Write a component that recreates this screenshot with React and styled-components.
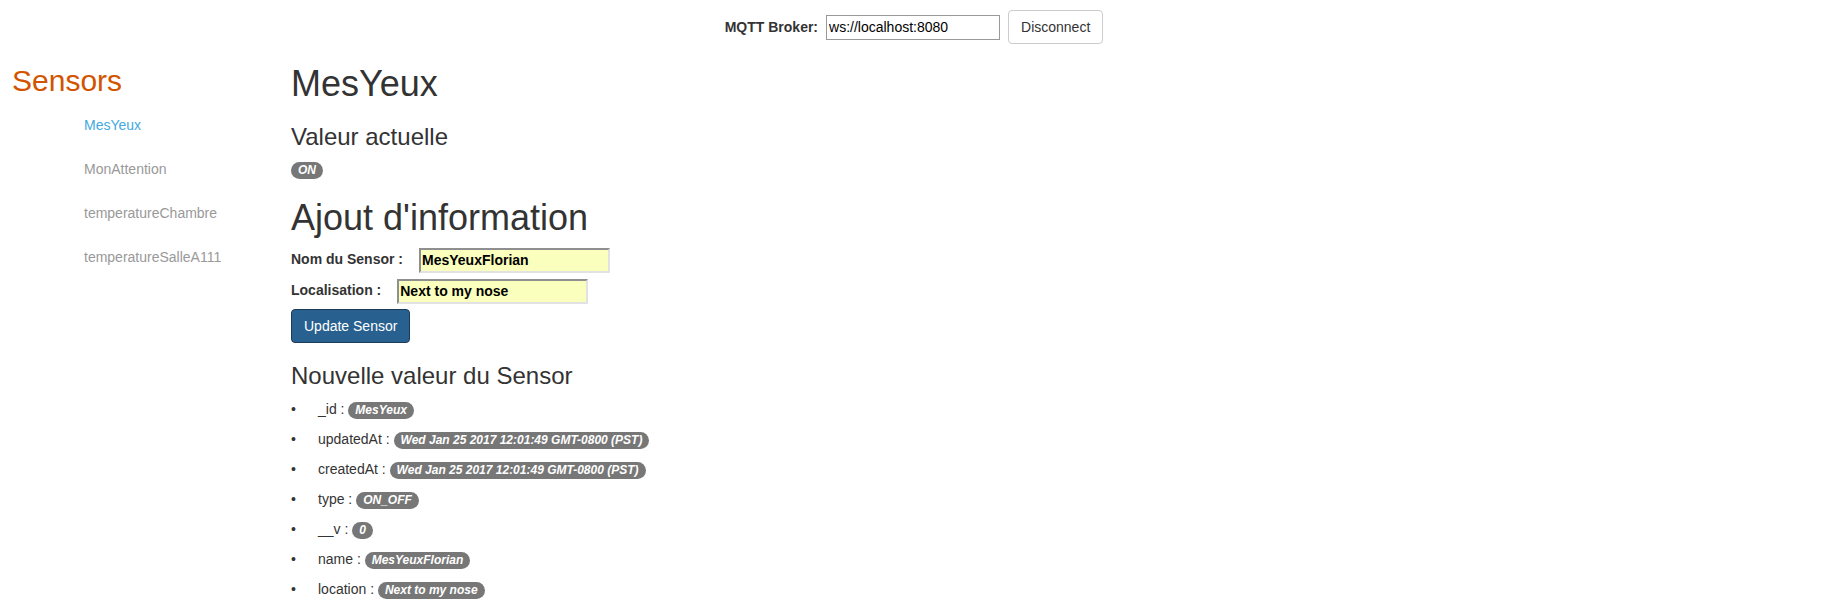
import styled, { createGlobalStyle } from 'styled-components';

const GlobalStyle = createGlobalStyle`
  html, body {
    margin: 0;
    padding: 0;
    background: #fff;
  }
  body {
    font-family: "Liberation Sans", Arial, sans-serif;
    font-size: 14px;
    line-height: 1.42857;
    color: #333;
  }
  * {
    box-sizing: border-box;
  }
`

const BrokerBar = styled.div`
  display: flex;
  justify-content: center;
  align-items: baseline;
  padding-top: 10px;
`

const BrokerLabel = styled.label`
  font-weight: bold;
  margin-right: 8px;
`

const BrokerInput = styled.input`
  width: 174px;
  height: 25px;
  padding: 1px 2px;
  border: 1px solid #999;
  font: 14px "Liberation Sans", Arial, sans-serif;
  color: #000;
`

const DefaultButton = styled.button`
  margin-left: 8px;
  padding: 6px 12px;
  font: 14px/20px "Liberation Sans", Arial, sans-serif;
  color: #333;
  background: #fff;
  border: 1px solid #ccc;
  border-radius: 4px;
`

const Layout = styled.div`
  display: grid;
  grid-template-columns: 291px 1fr;
`

const Sidebar = styled.aside`
  padding-left: 12px;
`

const SidebarTitle = styled.h2`
  margin: 20px 0 8px;
  font-size: 30px;
  font-weight: 500;
  line-height: 1.1;
  color: #d35400;
`

const SensorList = styled.ul`
  list-style: none;
  margin: 0;
  padding: 0 0 0 57px;
  display: flex;
  flex-direction: column;
  gap: 4px;
`

const SensorLink = styled.a`
  display: block;
  padding: 10px 15px;
  line-height: 20px;
  text-decoration: none;
  color: ${p => (p.$active ? '#3fa9e0' : '#999')};
`

const Main = styled.main``

const Title = styled.h1`
  margin: ${p => p.$top || 20}px 0 10px;
  font-size: 36px;
  font-weight: 500;
  line-height: 1.1;
`

const SubTitle = styled.h3`
  margin: 20px 0 10px;
  font-size: 24px;
  font-weight: 500;
  line-height: 1.1;
`

const Badge = styled.span`
  display: inline-block;
  min-width: 10px;
  padding: 2px 7px;
  font-size: 12px;
  font-weight: bold;
  font-style: italic;
  line-height: 13px;
  color: #fff;
  text-align: center;
  white-space: nowrap;
  vertical-align: middle;
  background: #777;
  border-radius: 10px;
`

const Form = styled.form`
  display: flex;
  flex-direction: column;
  align-items: flex-start;
  gap: 6px;
`

const FieldRow = styled.div`
  display: flex;
  align-items: center;
`

const FieldLabel = styled.label`
  font-weight: bold;
  margin-right: 16px;
`

const FieldInput = styled.input`
  width: 191px;
  height: 25px;
  padding: 1px 1px;
  font: bold 14px "Liberation Sans", Arial, sans-serif;
  color: #000;
  background: #faffbd;
  border: 2px solid;
  border-color: #8f8f8f #e2e2e2 #e2e2e2 #8f8f8f;
`

const PrimaryButton = styled.button`
  margin-top: -1px;
  padding: 6px 12px;
  font: 14px/20px "Liberation Sans", Arial, sans-serif;
  color: #fff;
  background: #286090;
  border: 1px solid #1d3b57;
  border-radius: 4px;
`

const PropList = styled.ul`
  list-style: none;
  margin: 0;
  padding: 0;
`

const PropItem = styled.li`
  line-height: 20px;
  margin-bottom: 10px;

  &::before {
    content: '•';
    display: inline-block;
    width: 27px;
  }
`

const sensors = ['MesYeux', 'MonAttention', 'temperatureChambre', 'temperatureSalleA111'];

const props = [
  ['_id', 'MesYeux'],
  ['updatedAt', 'Wed Jan 25 2017 12:01:49 GMT-0800 (PST)'],
  ['createdAt', 'Wed Jan 25 2017 12:01:49 GMT-0800 (PST)'],
  ['type', 'ON_OFF'],
  ['__v', '0'],
  ['name', 'MesYeuxFlorian'],
  ['location', 'Next to my nose'],
];

export default function App() {
  return <>
    <GlobalStyle />
    <BrokerBar>
      <BrokerLabel>MQTT Broker:</BrokerLabel>
      <BrokerInput defaultValue="ws://localhost:8080" />
      <DefaultButton>Disconnect</DefaultButton>
    </BrokerBar>
    <Layout>
      <Sidebar>
        <SidebarTitle>Sensors</SidebarTitle>
        <SensorList>
          {sensors.map((s, i) => (
            <li key={s}><SensorLink href="#" $active={i === 0}>{s}</SensorLink></li>
          ))}
        </SensorList>
      </Sidebar>
      <Main>
        <Title>MesYeux</Title>
        <SubTitle>Valeur actuelle</SubTitle>
        <div><Badge>ON</Badge></div>
        <Title $top={18}>Ajout d'information</Title>
        <Form onSubmit={e => e.preventDefault()}>
          <FieldRow>
            <FieldLabel>Nom du Sensor :</FieldLabel>
            <FieldInput defaultValue="MesYeuxFlorian" />
          </FieldRow>
          <FieldRow>
            <FieldLabel>Localisation :</FieldLabel>
            <FieldInput defaultValue="Next to my nose" />
          </FieldRow>
          <PrimaryButton>Update Sensor</PrimaryButton>
        </Form>
        <SubTitle>Nouvelle valeur du Sensor</SubTitle>
        <PropList>
          {props.map(([k, v]) => (
            <PropItem key={k}>{k} : <Badge>{v}</Badge></PropItem>
          ))}
        </PropList>
      </Main>
    </Layout>
  </>
}
